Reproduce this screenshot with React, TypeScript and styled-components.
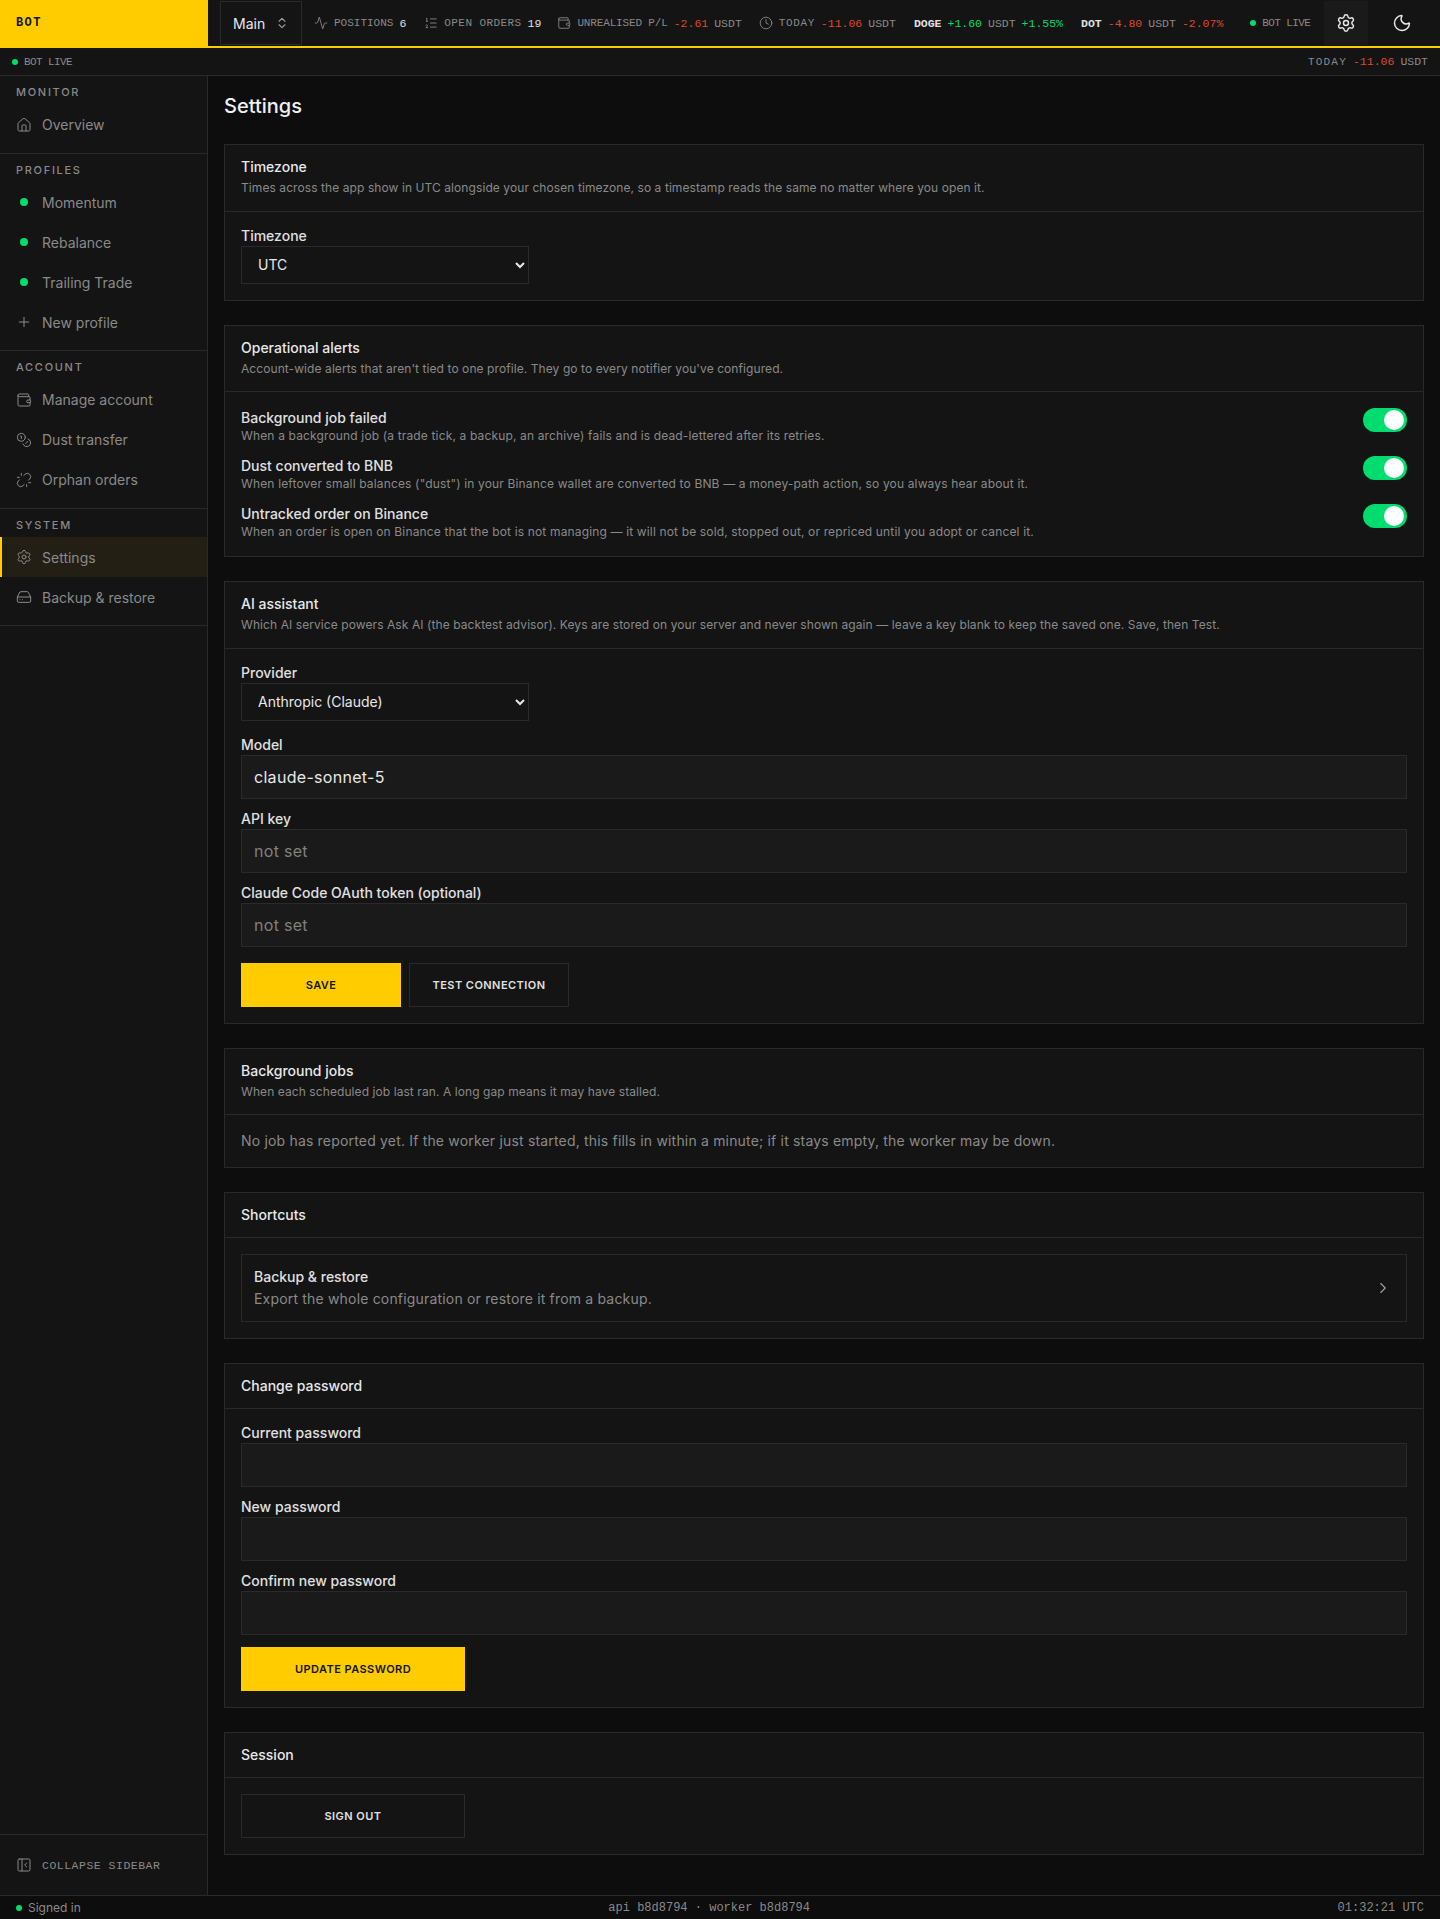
import React from 'react';
import styled, { createGlobalStyle } from 'styled-components';
import {
  Activity, ListOrdered, Wallet, Clock, Settings as Gear, Moon, ChevronsUpDown,
  House, Plus, Coins, Unlink, HardDrive, ChevronRight, PanelLeftClose,
} from 'lucide-react';

const sans = `Inter, "Liberation Sans", sans-serif`;
const mono = `"Liberation Mono", "DejaVu Sans Mono", monospace`;

const GlobalStyle = createGlobalStyle`
  html, body { margin: 0; padding: 0; background: #0d0d0d; }
  * { box-sizing: border-box; }
  body { font-family: ${sans}; color: #e8e8e8; }
`;

const Page = styled.div`
  width: 1440px;
  height: 1919px;
  display: flex;
  flex-direction: column;
  overflow: hidden;
`;

const TopBar = styled.header`
  height: 48px;
  display: flex;
  align-items: stretch;
  background: #141414;
  border-bottom: 2px solid #ffcc00;
  flex: none;
`;

const Logo = styled.div`
  width: 208px;
  height: 46px;
  background: #ffcc00;
  color: #141414;
  font: 700 12px ${mono};
  letter-spacing: 1.4px;
  display: flex;
  align-items: center;
  padding-left: 16px;
  flex: none;
`;

const ProfileSelect = styled.div`
  margin: 1px 0 1px 12px;
  width: 82px;
  border: 1px solid #2a2a2a;
  display: flex;
  align-items: center;
  gap: 10px;
  padding-left: 12px;
  font-size: 14px;
  color: #e8e8e8;
  flex: none;
  svg { color: #9a9a9a; }
`;

const Ticker = styled.div`
  display: flex;
  align-items: center;
  margin-left: 12px;
  flex: 1;
  min-width: 0;
  font: 400 11.5px ${mono};
  color: #8a8a8a;
  white-space: nowrap;
`;

const Stat = styled.span<{ $gap: number }>`
  display: inline-flex;
  align-items: center;
  gap: 6px;
  flex: none;
  margin-right: ${p => p.$gap}px;
  svg { color: #8a8a8a; }
`;

const Label = styled.span<{ $track?: number }>`
  font-size: 11px;
  letter-spacing: ${p => p.$track ?? 0}px;
`;

const Value = styled.span<{ $tone?: 'up' | 'down' }>`
  color: ${p => (p.$tone === 'up' ? '#00dc6e' : p.$tone === 'down' ? '#dc4a2e' : '#e0e0e0')};
`;

const Symbol = styled.span`
  color: #e0e0e0;
  font-weight: 700;
`;

const Dot = styled.span`
  width: 6px;
  height: 6px;
  border-radius: 50%;
  background: #00dc6e;
  flex: none;
`;

const IconButton = styled.div<{ $active?: boolean }>`
  width: 44px;
  height: 44px;
  margin: 1px 0;
  display: flex;
  align-items: center;
  justify-content: center;
  color: #e8e8e8;
  background: ${p => (p.$active ? '#1a1a1a' : 'transparent')};
  flex: none;
`;

const TopEnd = styled.div`
  display: flex;
  gap: 12px;
  padding-right: 16px;
  flex: none;
`;

const SubBar = styled.div`
  height: 28px;
  flex: none;
  display: flex;
  align-items: center;
  justify-content: space-between;
  padding: 0 12px;
  background: #141414;
  border-bottom: 1px solid #2a2a2a;
  font: 400 11.5px ${mono};
  color: #8a8a8a;
`;

const SubStat = styled.span`
  display: inline-flex;
  align-items: center;
  gap: 6px;
`;

const Body = styled.div`
  flex: 1;
  display: flex;
  min-height: 0;
`;

const Sidebar = styled.aside`
  width: 208px;
  flex: none;
  background: #141414;
  border-right: 1px solid #2a2a2a;
  display: flex;
  flex-direction: column;
`;

const NavGroup = styled.nav`
  padding-bottom: 8px;
  border-bottom: 1px solid #2a2a2a;
`;

const NavLabel = styled.div`
  height: 28.5px;
  padding: 9px 16px 0;
  font: 500 11px/15px ${sans};
  letter-spacing: 1.7px;
  color: #8a8a8a;
`;

const NavItem = styled.a<{ $active?: boolean }>`
  height: 40px;
  display: flex;
  align-items: center;
  gap: 10px;
  padding-left: ${p => (p.$active ? 14 : 16)}px;
  font-size: 14px;
  color: #8a8a8a;
  background: ${p => (p.$active ? '#241f14' : 'transparent')};
  border-left: ${p => (p.$active ? '2px solid #ffcc00' : 'none')};
  svg { flex: none; }
`;

const DotSlot = styled.span`
  width: 16px;
  display: flex;
  justify-content: center;
  flex: none;
  ${Dot} { width: 8px; height: 8px; }
`;

const Collapse = styled.div`
  margin-top: auto;
  height: 61px;
  border-top: 1px solid #2a2a2a;
  display: flex;
  align-items: center;
  gap: 10px;
  padding-left: 16px;
  font: 400 11.5px ${mono};
  letter-spacing: 0.5px;
  color: #8a8a8a;
`;

const Main = styled.main`
  flex: 1;
  padding: 16px 16px 0;
  min-width: 0;
`;

const PageTitle = styled.h1`
  margin: 0 0 23px;
  height: 29px;
  font: 500 20px/29px ${sans};
  color: #f0f0f0;
`;

const Card = styled.section`
  background: #141414;
  border: 1px solid #2a2a2a;
  margin-bottom: 24px;
`;

const CardHead = styled.div`
  padding: 11px 16px 12px;
  border-bottom: 1px solid #2a2a2a;
`;

const CardTitle = styled.h2`
  margin: 0;
  font: 500 14px/21px ${sans};
  color: #e8e8e8;
`;

const CardDesc = styled.p`
  margin: 2px 0 1.5px;
  font: 400 12px/18px ${sans};
  letter-spacing: 0.08px;
  color: #8a8a8a;
`;

const CardBody = styled.div`
  padding: 16px;
`;

const FieldLabel = styled.label`
  display: block;
  padding-bottom: 2px;
  font: 500 14px/16px ${sans};
  color: #e0e0e0;
`;

const SelectBox = styled.select`
  display: block;
  width: 288px;
  height: 38px;
  margin-bottom: 16px;
  padding: 0 12px;
  background: #141414;
  border: 1px solid #2a2a2a;
  border-radius: 0;
  color: #e8e8e8;
  font: 400 14px ${sans};
  &:last-child { margin-bottom: 0; }
`;

const TextField = styled.input`
  display: block;
  width: 100%;
  height: 44px;
  margin-bottom: 12px;
  padding: 0 12px;
  background: #1a1a1a;
  border: 1px solid #2a2a2a;
  border-radius: 0;
  color: #e8e8e8;
  font: 400 16px ${sans};
  letter-spacing: 0.3px;
  &::placeholder { color: #808080; opacity: 1; }
`;

const AlertList = styled.div`
  display: flex;
  flex-direction: column;
  gap: 12px;
`;

const AlertRow = styled.div`
  height: 36px;
  display: flex;
  align-items: flex-start;
  justify-content: space-between;
`;

const AlertTitle = styled.div`
  font: 500 14px/20px ${sans};
  color: #e0e0e0;
`;

const AlertText = styled.div`
  font: 400 12px/16px ${sans};
  letter-spacing: 0.15px;
  color: #8a8a8a;
`;

const Toggle = styled.span`
  position: relative;
  width: 44px;
  height: 24px;
  border-radius: 12px;
  background: #00dc6e;
  flex: none;
  &::after {
    content: '';
    position: absolute;
    top: 2px;
    right: 3px;
    width: 20px;
    height: 20px;
    border-radius: 50%;
    background: #fff;
  }
`;

const Buttons = styled.div`
  display: flex;
  gap: 8px;
  margin-top: 16px;
`;

const Button = styled.button<{ $primary?: boolean; $width?: number }>`
  display: block;
  width: ${p => p.$width ?? 160}px;
  height: 44px;
  background: ${p => (p.$primary ? '#ffcc00' : '#141414')};
  color: ${p => (p.$primary ? '#141414' : '#e0e0e0')};
  border: ${p => (p.$primary ? 'none' : '1px solid #2a2a2a')};
  border-radius: 0;
  font: 600 11px ${sans};
  letter-spacing: 0.45px;
  text-transform: uppercase;
`;

const Notice = styled.p`
  margin: 0;
  font: 400 14px/20px ${sans};
  letter-spacing: 0.18px;
  color: #8a8a8a;
`;

const LinkRow = styled.div`
  height: 68px;
  border: 1px solid #2a2a2a;
  display: flex;
  align-items: center;
  justify-content: space-between;
  padding: 0 14px 0 12px;
  svg { color: #a0a0a0; }
`;

const LinkTitle = styled.div`
  font: 500 14px/20px ${sans};
  color: #e0e0e0;
`;

const LinkText = styled.div`
  font: 400 14px/20px ${sans};
  letter-spacing: 0.18px;
  color: #8a8a8a;
  margin-top: 2px;
`;

const Footer = styled.footer`
  height: 24px;
  flex: none;
  display: flex;
  align-items: center;
  justify-content: space-between;
  padding: 0 16px;
  background: #0d0d0d;
  border-top: 1px solid #2a2a2a;
  font: 400 12px ${mono};
  color: #8a8a8a;
`;

const SignedIn = styled.span`
  display: inline-flex;
  align-items: center;
  gap: 6px;
  font: 400 12px ${sans};
`;

const Select = ({ children }: { children: string }) => (
  <SelectBox defaultValue={children}>
    <option>{children}</option>
  </SelectBox>
);

const alerts = [
  ['Background job failed', 'When a background job (a trade tick, a backup, an archive) fails and is dead-lettered after its retries.'],
  ['Dust converted to BNB', 'When leftover small balances ("dust") in your Binance wallet are converted to BNB — a money-path action, so you always hear about it.'],
  ['Untracked order on Binance', 'When an order is open on Binance that the bot is not managing — it will not be sold, stopped out, or repriced until you adopt or cancel it.'],
];

const App: React.FC = () => (
  <Page>
    <GlobalStyle />
    <TopBar>
      <Logo>BOT</Logo>
      <ProfileSelect>
        Main <ChevronsUpDown size={14} />
      </ProfileSelect>
      <Ticker>
        <Stat $gap={18}><Activity size={14} strokeWidth={1.5} /><Label>POSITIONS</Label><Value>6</Value></Stat>
        <Stat $gap={16}><ListOrdered size={14} strokeWidth={1.5} /><Label $track={0.42}>OPEN ORDERS</Label><Value>19</Value></Stat>
        <Stat $gap={17}><Wallet size={14} strokeWidth={1.5} /><Label $track={-0.15}>UNREALISED P/L</Label><Value $tone="down">-2.61</Value><span>USDT</span></Stat>
        <Stat $gap={18}><Clock size={14} strokeWidth={1.5} /><Label $track={0.6}>TODAY</Label><Value $tone="down">-11.06</Value><span>USDT</span></Stat>
        <Stat $gap={18}><Symbol>DOGE</Symbol><Value $tone="up">+1.60</Value><span>USDT</span><Value $tone="up">+1.55%</Value></Stat>
        <Stat $gap={27}><Symbol>DOT</Symbol><Value $tone="down">-4.80</Value><span>USDT</span><Value $tone="down">-2.07%</Value></Stat>
        <Stat $gap={0}><Dot /><Label $track={-0.6}>BOT LIVE</Label></Stat>
      </Ticker>
      <TopEnd>
        <IconButton $active><Gear size={20} strokeWidth={1.75} /></IconButton>
        <IconButton><Moon size={20} strokeWidth={1.75} /></IconButton>
      </TopEnd>
    </TopBar>
    <SubBar>
      <SubStat><Dot /><Label $track={-0.6}>BOT LIVE</Label></SubStat>
      <SubStat><Label $track={1.2}>TODAY</Label><Value $tone="down">-11.06</Value><span>USDT</span></SubStat>
    </SubBar>
    <Body>
      <Sidebar>
        <NavGroup>
          <NavLabel>MONITOR</NavLabel>
          <NavItem><House size={16} strokeWidth={1.5} />Overview</NavItem>
        </NavGroup>
        <NavGroup>
          <NavLabel>PROFILES</NavLabel>
          <NavItem><DotSlot><Dot /></DotSlot>Momentum</NavItem>
          <NavItem><DotSlot><Dot /></DotSlot>Rebalance</NavItem>
          <NavItem><DotSlot><Dot /></DotSlot>Trailing Trade</NavItem>
          <NavItem><Plus size={16} strokeWidth={1.5} />New profile</NavItem>
        </NavGroup>
        <NavGroup>
          <NavLabel>ACCOUNT</NavLabel>
          <NavItem><Wallet size={16} strokeWidth={1.5} />Manage account</NavItem>
          <NavItem><Coins size={16} strokeWidth={1.5} />Dust transfer</NavItem>
          <NavItem><Unlink size={16} strokeWidth={1.5} />Orphan orders</NavItem>
        </NavGroup>
        <NavGroup>
          <NavLabel>SYSTEM</NavLabel>
          <NavItem $active><Gear size={16} strokeWidth={1.5} />Settings</NavItem>
          <NavItem><HardDrive size={16} strokeWidth={1.5} />Backup &amp; restore</NavItem>
        </NavGroup>
        <Collapse><PanelLeftClose size={16} strokeWidth={1.5} />COLLAPSE SIDEBAR</Collapse>
      </Sidebar>
      <Main>
        <PageTitle>Settings</PageTitle>
        <Card>
          <CardHead>
            <CardTitle>Timezone</CardTitle>
            <CardDesc>Times across the app show in UTC alongside your chosen timezone, so a timestamp reads the same no matter where you open it.</CardDesc>
          </CardHead>
          <CardBody>
            <FieldLabel>Timezone</FieldLabel>
            <Select>UTC</Select>
          </CardBody>
        </Card>
        <Card>
          <CardHead>
            <CardTitle>Operational alerts</CardTitle>
            <CardDesc>Account-wide alerts that aren't tied to one profile. They go to every notifier you've configured.</CardDesc>
          </CardHead>
          <CardBody>
            <AlertList>
              {alerts.map(([title, text]) => (
                <AlertRow key={title}>
                  <div>
                    <AlertTitle>{title}</AlertTitle>
                    <AlertText>{text}</AlertText>
                  </div>
                  <Toggle />
                </AlertRow>
              ))}
            </AlertList>
          </CardBody>
        </Card>
        <Card>
          <CardHead>
            <CardTitle>AI assistant</CardTitle>
            <CardDesc>Which AI service powers Ask AI (the backtest advisor). Keys are stored on your server and never shown again — leave a key blank to keep the saved one. Save, then Test.</CardDesc>
          </CardHead>
          <CardBody>
            <FieldLabel>Provider</FieldLabel>
            <Select>Anthropic (Claude)</Select>
            <FieldLabel>Model</FieldLabel>
            <TextField defaultValue="claude-sonnet-5" />
            <FieldLabel>API key</FieldLabel>
            <TextField placeholder="not set" />
            <FieldLabel>Claude Code OAuth token (optional)</FieldLabel>
            <TextField placeholder="not set" />
            <Buttons>
              <Button $primary>Save</Button>
              <Button>Test connection</Button>
            </Buttons>
          </CardBody>
        </Card>
        <Card>
          <CardHead>
            <CardTitle>Background jobs</CardTitle>
            <CardDesc>When each scheduled job last ran. A long gap means it may have stalled.</CardDesc>
          </CardHead>
          <CardBody>
            <Notice>No job has reported yet. If the worker just started, this fills in within a minute; if it stays empty, the worker may be down.</Notice>
          </CardBody>
        </Card>
        <Card>
          <CardHead>
            <CardTitle>Shortcuts</CardTitle>
          </CardHead>
          <CardBody>
            <LinkRow>
              <div>
                <LinkTitle>Backup &amp; restore</LinkTitle>
                <LinkText>Export the whole configuration or restore it from a backup.</LinkText>
              </div>
              <ChevronRight size={18} strokeWidth={1.5} />
            </LinkRow>
          </CardBody>
        </Card>
        <Card>
          <CardHead>
            <CardTitle>Change password</CardTitle>
          </CardHead>
          <CardBody>
            <FieldLabel>Current password</FieldLabel>
            <TextField />
            <FieldLabel>New password</FieldLabel>
            <TextField />
            <FieldLabel>Confirm new password</FieldLabel>
            <TextField />
            <Button $primary $width={224}>Update password</Button>
          </CardBody>
        </Card>
        <Card>
          <CardHead>
            <CardTitle>Session</CardTitle>
          </CardHead>
          <CardBody>
            <Button $width={224}>Sign out</Button>
          </CardBody>
        </Card>
      </Main>
    </Body>
    <Footer>
      <SignedIn><Dot />Signed in</SignedIn>
      <span>api b8d8794 · worker b8d8794</span>
      <span>01:32:21 UTC</span>
    </Footer>
  </Page>
);

export default App;
